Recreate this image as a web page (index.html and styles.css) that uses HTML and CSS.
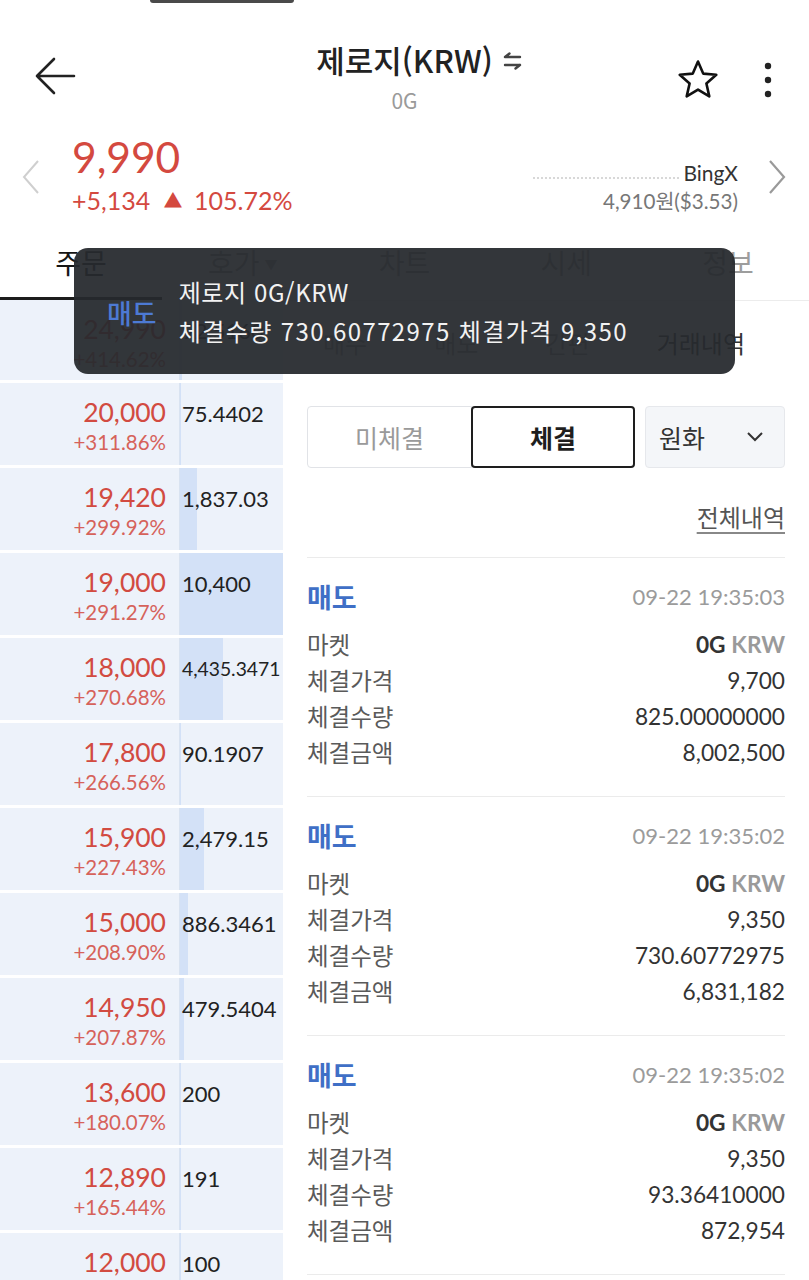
FILE: index.html
```html
<!DOCTYPE html>
<html lang="ko">
<head>
<meta charset="utf-8">
<title>제로지(KRW)</title>
<link rel="stylesheet" href="styles.css">
</head>
<body>
<div class="status"><div class="pill"></div></div>

<header class="topbar">
  <div class="back">
    <svg width="42" height="38" viewBox="0 0 42 38"><path d="M40 19 H3 M20 2 L3 19 L20 36" fill="none" stroke="#222" stroke-width="2.6" stroke-linecap="round" stroke-linejoin="round"/></svg>
  </div>
  <div class="title">
    <div class="name"><span>제로지(KRW)</span>
      <svg class="swap" width="19" height="18" viewBox="0 0 19 18"><path d="M2 5 H17 M2 5 L6.5 1.5 M17 13 H2 M17 13 L12.5 16.5" fill="none" stroke="#444" stroke-width="2.4" stroke-linecap="round" stroke-linejoin="round"/></svg>
    </div>
    <div class="sym">0G</div>
  </div>
  <div class="actions">
    <svg width="44" height="44" viewBox="0 0 44 44"><path d="M22 3.5 L27.2 15.6 L40.3 16.8 L30.4 25.5 L33.3 38.4 L22 31.6 L10.7 38.4 L13.6 25.5 L3.7 16.8 L16.8 15.6 Z" fill="none" stroke="#111" stroke-width="2.6" stroke-linejoin="round"/></svg>
    <svg width="12" height="38" viewBox="0 0 12 38"><circle cx="6" cy="5" r="3.2" fill="#222"/><circle cx="6" cy="19" r="3.2" fill="#222"/><circle cx="6" cy="33" r="3.2" fill="#222"/></svg>
  </div>
</header>

<section class="quote">
  <svg class="chev chev-l" width="20" height="36" viewBox="0 0 20 36"><path d="M17 2 L3 18 L17 34" fill="none" stroke="#cfcfcf" stroke-width="2"/></svg>
  <div class="price">
    <div class="big">9,990</div>
    <div class="chg">+5,134 <span class="tri">▲</span> 105.72%</div>
  </div>
  <div class="spacer"></div>
  <div class="ext">
    <div class="ex-name"><span class="dots"></span><span>BingX</span></div>
    <div class="ex-price">4,910원($3.53)</div>
  </div>
  <svg class="chev chev-r" width="20" height="36" viewBox="0 0 20 36"><path d="M3 2 L17 18 L3 34" fill="none" stroke="#9a9a9a" stroke-width="2.2"/></svg>
</section>

<nav class="tabs">
  <div class="tab active">주문</div>
  <div class="tab">호가<span class="caret">▼</span></div>
  <div class="tab">차트</div>
  <div class="tab">시세</div>
  <div class="tab">정보</div>
</nav>

<main class="main">
  <div class="orderbook">
    <div class="ob-row first"><div class="px"><div class="p">24,990</div><div class="c">+414.62%</div></div><div class="qty" style="--w:2px">92.5160</div></div>
    <div class="ob-row"><div class="px"><div class="p">20,000</div><div class="c">+311.86%</div></div><div class="qty" style="--w:1px">75.4402</div></div>
    <div class="ob-row"><div class="px"><div class="p">19,420</div><div class="c">+299.92%</div></div><div class="qty" style="--w:17px">1,837.03</div></div>
    <div class="ob-row"><div class="px"><div class="p">19,000</div><div class="c">+291.27%</div></div><div class="qty" style="--w:103px">10,400</div></div>
    <div class="ob-row"><div class="px"><div class="p">18,000</div><div class="c">+270.68%</div></div><div class="qty tight" style="--w:43px">4,435.3471</div></div>
    <div class="ob-row"><div class="px"><div class="p">17,800</div><div class="c">+266.56%</div></div><div class="qty" style="--w:1px">90.1907</div></div>
    <div class="ob-row"><div class="px"><div class="p">15,900</div><div class="c">+227.43%</div></div><div class="qty" style="--w:24px">2,479.15</div></div>
    <div class="ob-row"><div class="px"><div class="p">15,000</div><div class="c">+208.90%</div></div><div class="qty" style="--w:8px">886.3461</div></div>
    <div class="ob-row"><div class="px"><div class="p">14,950</div><div class="c">+207.87%</div></div><div class="qty" style="--w:4px">479.5404</div></div>
    <div class="ob-row"><div class="px"><div class="p">13,600</div><div class="c">+180.07%</div></div><div class="qty" style="--w:1px">200</div></div>
    <div class="ob-row"><div class="px"><div class="p">12,890</div><div class="c">+165.44%</div></div><div class="qty" style="--w:1px">191</div></div>
    <div class="ob-row"><div class="px"><div class="p">12,000</div><div class="c">+140.24%</div></div><div class="qty" style="--w:1px">100</div></div>
  </div>

  <div class="panel">
    <div class="subtabs">
      <span>매수</span><span>매도</span><span>간편</span><span class="on">거래내역</span>
    </div>
    <div class="seg">
      <div class="opt">미체결</div>
      <div class="opt sel">체결</div>
      <div class="select"><span>원화</span>
        <svg width="18" height="12" viewBox="0 0 18 12"><path d="M2 2 L9 9 L16 2" fill="none" stroke="#333" stroke-width="2"/></svg>
      </div>
    </div>
    <div class="more"><span class="link">전체내역</span></div>

    <div class="trade">
      <div class="trade-head"><span class="side">매도</span><span class="time">09-22 19:35:03</span></div>
      <div class="rows">
        <div class="row"><span class="lbl">마켓</span><span class="val"><b>0G</b> <span class="cur">KRW</span></span></div>
        <div class="row"><span class="lbl">체결가격</span><span class="val">9,700</span></div>
        <div class="row"><span class="lbl">체결수량</span><span class="val">825.00000000</span></div>
        <div class="row"><span class="lbl">체결금액</span><span class="val">8,002,500</span></div>
      </div>
    </div>
    <div class="trade">
      <div class="trade-head"><span class="side">매도</span><span class="time">09-22 19:35:02</span></div>
      <div class="rows">
        <div class="row"><span class="lbl">마켓</span><span class="val"><b>0G</b> <span class="cur">KRW</span></span></div>
        <div class="row"><span class="lbl">체결가격</span><span class="val">9,350</span></div>
        <div class="row"><span class="lbl">체결수량</span><span class="val">730.60772975</span></div>
        <div class="row"><span class="lbl">체결금액</span><span class="val">6,831,182</span></div>
      </div>
    </div>
    <div class="trade">
      <div class="trade-head"><span class="side">매도</span><span class="time">09-22 19:35:02</span></div>
      <div class="rows">
        <div class="row"><span class="lbl">마켓</span><span class="val"><b>0G</b> <span class="cur">KRW</span></span></div>
        <div class="row"><span class="lbl">체결가격</span><span class="val">9,350</span></div>
        <div class="row"><span class="lbl">체결수량</span><span class="val">93.36410000</span></div>
        <div class="row"><span class="lbl">체결금액</span><span class="val">872,954</span></div>
      </div>
    </div>
    <div class="trade"></div>
  </div>
</main>

<div class="toast">
  <div class="toast-side">매도</div>
  <div class="toast-body">
    <div>제로지 0G/KRW</div>
    <div class="wide">체결수량 730.60772975 체결가격 9,350</div>
  </div>
</div>
</body>
</html>
```

FILE: styles.css
```css
html, body {
  margin: 0;
  padding: 0;
}
body {
  width: 809px;
  height: 1280px;
  overflow: hidden;
  background: #fff;
  position: relative;
  font-family: "Noto Sans CJK KR", "Noto Sans", sans-serif;
  color: #222;
}

.status { height: 3px; }
.pill {
  margin-left: 150px;
  width: 144px;
  height: 3px;
  background: #4a4a4a;
  border-radius: 0 0 3px 3px;
}

/* header */
.topbar {
  display: grid;
  grid-template-columns: 1fr auto 1fr;
  padding-top: 38px;
}
.back {
  padding-left: 34px;
  margin-top: 16px;
}
.title { text-align: center; }
.name {
  display: inline-flex;
  align-items: center;
  gap: 10px;
  padding-left: 29px;
  font-size: 31px;
  line-height: 38px;
  font-weight: 500;
  color: #222;
}
.swap { margin-top: 2px; }
.sym {
  font-size: 21px;
  line-height: 24px;
  color: #9a9a9a;
  margin-top: 9px;
}
.actions {
  justify-self: end;
  display: flex;
  align-items: center;
  gap: 42px;
  padding-right: 35px;
  margin-top: 7px;
}

/* quote */
.quote {
  display: flex;
  align-items: flex-start;
  padding-top: 22px;
  height: 118px;
  box-sizing: border-box;
}
.chev { margin-top: 25px; flex: none; }
.chev-l { margin-left: 21px; }
.chev-r { margin-left: 29px; margin-right: 22px; }
.price {
  margin-left: 31px;
  font-family: Lato, "Noto Sans CJK KR", sans-serif;
  color: #d4493f;
}
.big {
  font-size: 42.5px;
  line-height: 46px;
}
.chg {
  font-size: 25px;
  line-height: 30px;
  margin-top: 5px;
}
.tri { font-size: 19px; vertical-align: 2px; margin: 0 5px 0 7px; }
.spacer { flex: 1; }
.ext {
  margin-top: 25px;
  text-align: right;
  font-family: Lato, "Noto Sans CJK KR", sans-serif;
}
.ex-name {
  display: flex;
  align-items: flex-end;
  justify-content: flex-end;
  font-size: 21px;
  line-height: 28px;
  color: #333;
}
.dots {
  width: 146px;
  border-top: 2px dotted #d8d8d8;
  margin: 0 4px 8px 0;
}
.ex-price {
  font-size: 20.6px;
  line-height: 28px;
  color: #777;
}

/* tabs */
.tabs {
  display: flex;
  height: 70px;
}
.tab {
  flex: 1;
  text-align: center;
  font-size: 28px;
  line-height: 64px;
  color: #9d9d9d;
  box-sizing: border-box;
}
.tab.active {
  color: #151515;
  border-bottom: 3px solid #1c1c1c;
}
.caret {
  font-size: 13px;
  margin-left: 5px;
  vertical-align: 5px;
  color: #aaa;
}

/* main */
.main {
  display: grid;
  grid-template-columns: 283px 1fr;
}

.ob-row {
  display: grid;
  grid-template-columns: 179px 1fr;
  height: 82px;
  margin-bottom: 3px;
  background: #edf2fa;
  font-family: Lato, sans-serif;
}
.ob-row.first { height: 80px; }
.px {
  text-align: right;
  padding: 14px 13px 0 0;
}
.p {
  font-size: 26.5px;
  line-height: 30px;
  color: #d24b41;
}
.c {
  font-size: 20.5px;
  line-height: 24px;
  margin-top: 3px;
  color: #d6625a;
}
.qty {
  border-left: 1px solid #d9e3f1;
  padding: 15px 0 0 2px;
  font-size: 22px;
  line-height: 32px;
  color: #222;
  background: linear-gradient(to right, #d3e1f7 var(--w), transparent var(--w));
}
.qty.tight { font-size: 19.3px; }

/* right panel */
.panel {
  padding: 0 24px;
  border-top: 1px solid #ececec;
}
.subtabs {
  height: 82px;
  display: flex;
  align-items: center;
  justify-content: space-between;
  padding: 0 40px 0 16px;
  font-size: 24px;
  color: #9a9a9a;
}
.subtabs .on { color: #333; }

.seg {
  display: flex;
  margin-top: 23px;
  height: 62px;
  font-size: 25px;
}
.opt {
  width: 165px;
  box-sizing: border-box;
  display: flex;
  align-items: center;
  justify-content: center;
  border: 1px solid #e1e3e7;
  border-radius: 4px 0 0 4px;
  color: #9a9a9a;
}
.opt.sel {
  width: 164px;
  margin-left: -1px;
  border: 2px solid #1e1e1e;
  border-radius: 4px;
  color: #1e1e1e;
  font-weight: 700;
}
.select {
  flex: 1;
  margin-left: 10px;
  display: flex;
  align-items: center;
  justify-content: space-between;
  padding: 0 20px 0 13px;
  background: #f4f6f9;
  border: 1px solid #e6e8ec;
  border-radius: 4px;
  color: #333;
}

.more {
  text-align: right;
  margin-top: 34px;
  margin-bottom: 22px;
  line-height: 30px;
}
.link {
  font-size: 24px;
  color: #555;
  text-decoration: underline;
  text-decoration-color: #888;
  text-underline-offset: 5px;
}

.trade {
  border-top: 1px solid #ebebeb;
  padding: 21px 0 26px;
}
.trade-head {
  display: flex;
  justify-content: space-between;
  align-items: center;
  height: 34px;
}
.side {
  color: #3f6fc6;
  font-weight: 700;
  font-size: 27px;
}
.time {
  font-family: Lato, sans-serif;
  font-size: 22px;
  color: #9b9b9b;
}
.rows { margin-top: 13px; }
.row {
  display: flex;
  justify-content: space-between;
  align-items: center;
  height: 36px;
}
.lbl {
  font-size: 23.5px;
  color: #5a5a5a;
}
.val {
  font-family: Lato, sans-serif;
  font-size: 22.7px;
  color: #333;
}
.val b { font-weight: 700; color: #333; }
.cur { color: #9a9a9a; font-weight: 700; }

/* toast overlay */
.toast {
  position: absolute;
  left: 74px;
  top: 248px;
  width: 661px;
  height: 126px;
  box-sizing: border-box;
  border-radius: 14px;
  background: rgba(38, 41, 46, 0.94);
  display: flex;
  align-items: center;
  padding-left: 33px;
  gap: 22px;
  color: #f2f2f2;
}
.toast-side {
  color: #4d7ad4;
  font-size: 27px;
  font-weight: 500;
  margin-top: 2px;
}
.toast-body {
  font-size: 24px;
  line-height: 39px;
  letter-spacing: 0.6px;
}
.toast-body .wide { letter-spacing: 1.4px; }
```
